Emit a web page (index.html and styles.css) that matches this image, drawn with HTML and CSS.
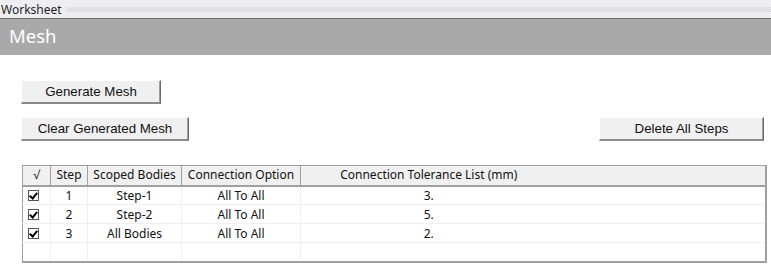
FILE: index.html
```html
<!DOCTYPE html>
<html>
<head>
<meta charset="utf-8">
<link rel="stylesheet" href="styles.css">
</head>
<body>
<div class="tab">
  <span class="tab-label">Worksheet</span>
  <span class="tab-dots"></span>
</div>
<div class="title">Mesh</div>
<div class="content">
  <div class="row-top">
    <button class="btn btn-gen">Generate Mesh</button>
  </div>
  <div class="row-mid">
    <button class="btn btn-clear">Clear Generated Mesh</button>
    <button class="btn btn-del">Delete All Steps</button>
  </div>
  <table class="grid">
    <colgroup>
      <col class="c1"><col class="c2"><col class="c3"><col class="c4"><col class="c5"><col>
    </colgroup>
    <thead>
      <tr>
        <th>√</th><th>Step</th><th>Scoped Bodies</th><th>Connection Option</th><th class="h5">Connection Tolerance List (mm)</th><th class="hl"></th>
      </tr>
    </thead>
    <tbody>
      <tr><td><span class="cb"></span></td><td>1</td><td>Step-1</td><td>All To All</td><td>3.</td><td></td></tr>
      <tr><td><span class="cb"></span></td><td>2</td><td>Step-2</td><td>All To All</td><td>5.</td><td></td></tr>
      <tr><td><span class="cb"></span></td><td>3</td><td>All Bodies</td><td>All To All</td><td>2.</td><td></td></tr>
      <tr class="empty"><td></td><td></td><td></td><td></td><td></td><td></td></tr>
    </tbody>
  </table>
</div>
</body>
</html>
```
FILE: styles.css
```css
* { box-sizing: border-box; }
html, body { margin: 0; padding: 0; background: #fff; }
body { font-family: "Noto Sans", "Open Sans", sans-serif; width: 771px; height: 265px; overflow: hidden; }

.tab {
  height: 19px;
  background: #eeeef2;
  display: flex;
  align-items: center;
  border-bottom: 1px solid #6e6e6e;
}
.tab-label {
  font-size: 12px;
  color: #1e1e1e;
  padding-left: 1px;
  padding-right: 5px;
  line-height: 19px;
}
.tab-dots {
  flex: 1;
  height: 5px;
  margin-top: 1px;
  background-image:
    linear-gradient(45deg, #d4d4d8 25%, transparent 25%, transparent 75%, #d4d4d8 75%),
    linear-gradient(45deg, #d4d4d8 25%, transparent 25%, transparent 75%, #d4d4d8 75%);
  background-size: 2px 2px;
  background-position: 0 0, 1px 1px;
}
.title {
  height: 36px;
  background: #a9a9a9;
  color: #fff;
  font-size: 18.5px;
  line-height: 34px;
  padding-left: 9px;
}
.content { padding: 24px 5px 0 21px; }
.row-top { height: 38px; }
.row-mid { height: 48px; display: flex; justify-content: space-between; }
.btn {
  font-family: "Liberation Sans", Arial, sans-serif;
  font-size: 13.3px;
  color: #111;
  background: #f0f0f0;
  border: none;
  border-top: 1px solid #fff;
  border-left: 1px solid #fff;
  border-right: 1px solid #6a6a6a;
  border-bottom: 2px solid #8a8a8a;
  height: 24px;
  padding: 0;
  box-shadow: inset -1px 0 0 #a0a0a0;
}
.btn-gen { width: 140px; }
.btn-clear { width: 168px; }
.btn-del { width: 165px; margin-right: 2px; }

.grid {
  border-collapse: collapse;
  table-layout: fixed;
  width: 745px;
  margin-left: 1px;
  border: 1px solid #a0a0a0;
  border-bottom: 2px solid #a0a0a0;
  border-right: 2px solid #a0a0a0;
  font-size: 12px;
  color: #111;
}
.c1 { width: 28px; }
.c2 { width: 37px; }
.c3 { width: 94px; }
.c4 { width: 119px; }
.c5 { width: 256px; }
.grid th {
  background: #f0f0f0;
  font-weight: normal;
  height: 20px;
  padding: 0;
  border-right: 1px solid #a0a0a0;
  border-bottom: 2px solid #a0a0a0;
  white-space: nowrap;
  text-align: center;
  line-height: 18px;
}
.grid th.h5 { border-right: none; text-align: center; }
.grid th.hl { border-right: none; }
.grid td {
  height: 19px;
  padding: 0;
  text-align: center;
  border-right: 1px solid #f0f0f0;
  border-bottom: 1px solid #f0f0f0;
  white-space: nowrap;
  line-height: 17px;
}
.grid td:first-child { text-align: left; padding-left: 5px; }
.grid td:nth-child(5) { border-right: none; }
.grid tr.empty td { height: 19px; border-bottom: none; }
.cb {
  display: inline-block;
  width: 11px;
  height: 11px;
  border: 1px solid #555;
  background: #fff;
  vertical-align: middle;
  position: relative;
  margin-top: -2px;
}
.cb::after {
  content: "";
  position: absolute;
  left: 2px;
  top: 0px;
  width: 3px;
  height: 6px;
  border-right: 2px solid #000;
  border-bottom: 2px solid #000;
  transform: rotate(40deg);
}
```
